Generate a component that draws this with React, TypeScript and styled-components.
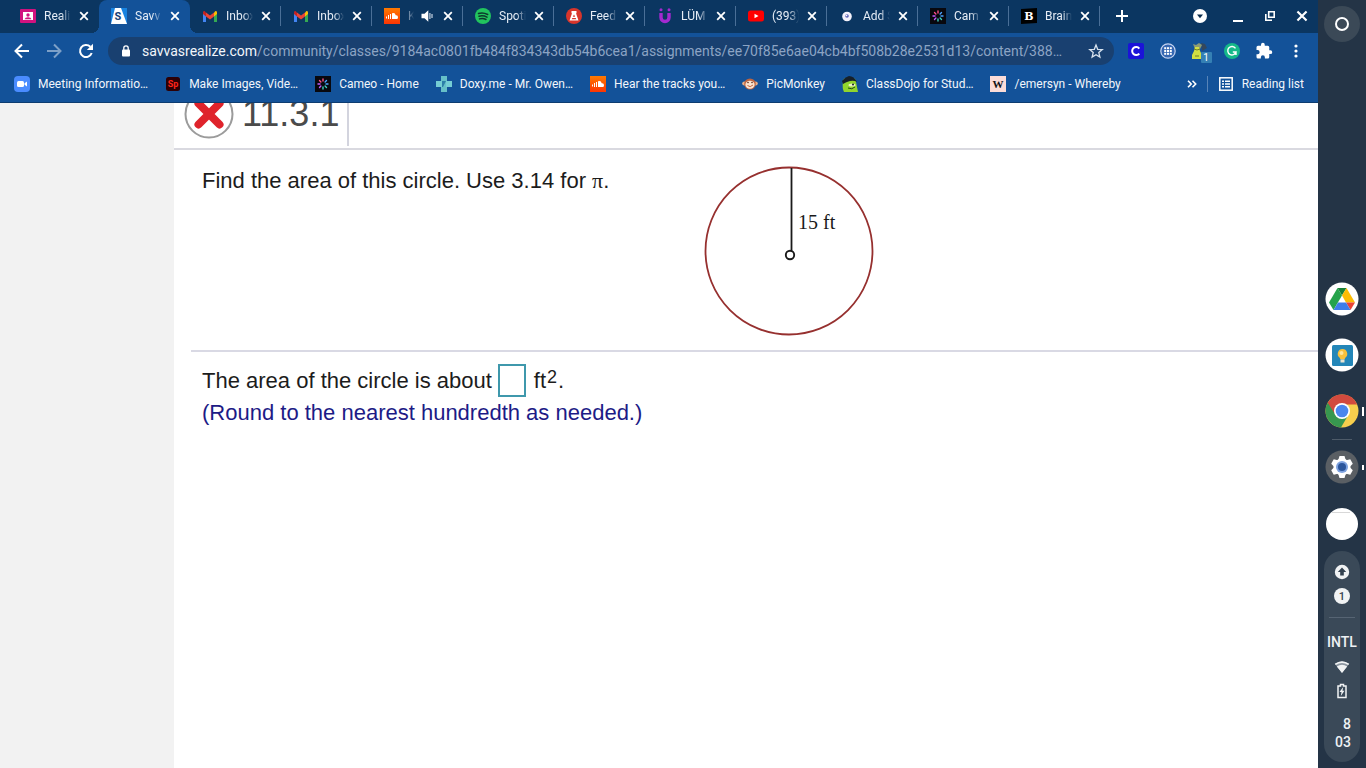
import React from "react";
import styled, { createGlobalStyle, css } from "styled-components";

const GlobalStyle = createGlobalStyle`
  *, *::before, *::after { box-sizing: border-box; }
  body { margin: 0; background: #fff; }
  button { font: inherit; color: inherit; background: none; border: 0; padding: 0; cursor: pointer; }
  svg { display: block; }
`;

const Desktop = styled.div`
  display: grid;
  grid-template-columns: minmax(0, 1fr) 48px;
  min-height: 100vh;
  font-family: Roboto, "Liberation Sans", sans-serif;
`;

const BrowserWindow = styled.div`
  display: flex;
  flex-direction: column;
  min-width: 0;
`;

/* ---------- tab strip ---------- */

const TabStrip = styled.header`
  display: flex;
  align-items: stretch;
  height: 33px;
  padding-left: 8px;
  background: #0b3661;
  color: #e6edf6;
  font-size: 12px;
`;

const Tab = styled.div<{ $active?: boolean; $divided?: boolean }>`
  position: relative;
  display: flex;
  align-items: center;
  flex: 0 1 91px;
  min-width: 0;
  padding: 0 7px 1px 12px;
  ${(p) =>
    p.$divided &&
    css`
      &::after {
        content: "";
        position: absolute;
        right: 0;
        top: 6px;
        width: 1px;
        height: 20px;
        background: #4a6f97;
      }
    `}
  ${(p) =>
    p.$active &&
    css`
      &::before {
        content: "";
        position: absolute;
        inset: 0 0 0 0;
        background: #135299;
        border-radius: 8px 8px 0 0;
      }
    `}
`;

const TabFlare = styled.span<{ $side: "left" | "right" }>`
  position: absolute;
  bottom: 0;
  ${(p) => p.$side}: -8px;
  width: 8px;
  height: 8px;
  background: radial-gradient(
    circle at ${(p) => (p.$side === "left" ? "0 0" : "100% 0")},
    transparent 8px,
    #135299 8px
  );
`;

const TabLabel = styled.a`
  position: relative;
  flex: 1;
  min-width: 0;
  margin: 0 5px 0 8px;
  overflow: hidden;
  white-space: nowrap;
  color: inherit;
  text-decoration: none;
  line-height: 16px;
  mask-image: linear-gradient(to right, #000 calc(100% - 10px), transparent 100%);
`;

const Favicon = styled.span`
  position: relative;
  flex: none;
  width: 16px;
  height: 16px;
`;

const TabButton = styled.button`
  position: relative;
  flex: none;
  display: grid;
  place-items: center;
  width: 16px;
  height: 16px;
`;

const AudioButton = styled(TabButton)`
  margin-right: 5px;
`;

const StripButton = styled.button<{ $width?: number }>`
  display: grid;
  place-items: center;
  flex: none;
  width: ${(p) => p.$width ?? 32}px;
  height: 32px;
  color: #fff;
`;

const WindowControls = styled.div`
  display: flex;
  margin-left: auto;
`;

/* ---------- toolbar ---------- */

const Toolbar = styled.div`
  display: flex;
  align-items: center;
  height: 37px;
  padding: 0 6px 1px;
  gap: 6px;
  background: #135299;
`;

const ButtonRow = styled.div`
  display: flex;
`;

const ToolButton = styled.button<{ $dim?: boolean }>`
  display: grid;
  place-items: center;
  width: 32px;
  height: 32px;
  color: #fff;
  opacity: ${(p) => (p.$dim ? 0.45 : 1)};
`;

const Omnibox = styled.form`
  display: flex;
  align-items: center;
  flex: 1;
  min-width: 0;
  height: 28px;
  padding: 0 10px 0 12px;
  border-radius: 14px;
  background: #194070;
  color: #fff;
`;

const Url = styled.div`
  flex: 1;
  min-width: 0;
  margin: 0 8px 0 10px;
  overflow: hidden;
  white-space: nowrap;
  font-size: 14px;
  line-height: 20px;
  color: #8ca4c4;
`;

const Host = styled.span`
  color: #f2f6fb;
`;

/* ---------- bookmarks ---------- */

const BookmarkBar = styled.nav`
  display: flex;
  align-items: center;
  height: 33px;
  padding: 0 14px 4px;
  gap: 17px;
  background: #135299;
  border-bottom: 1px solid #0d3c70;
  color: #f2f6fb;
  font-size: 12px;
  line-height: 16px;
`;

const Bookmark = styled.a`
  display: flex;
  align-items: center;
  gap: 8px;
  white-space: nowrap;
  color: inherit;
  text-decoration: none;
`;

const BookmarkEnd = styled.div`
  display: flex;
  align-items: center;
  gap: 10px;
  margin-left: auto;
`;

const BarDivider = styled.span`
  width: 1px;
  height: 16px;
  background: #5784b8;
`;

const ReadingList = styled.button`
  display: flex;
  align-items: center;
  gap: 8px;
  white-space: nowrap;
`;

/* ---------- page ---------- */

const Page = styled.div`
  display: flex;
  flex: 1;
  background: #fff;
  font-family: "Liberation Sans", Arial, sans-serif;
`;

const Gutter = styled.aside`
  flex: none;
  width: 174px;
  background: #f2f2f2;
`;

const Exercise = styled.main`
  flex: 1;
  min-width: 0;
  color: #1c1c1c;
  font-size: 22px;
  line-height: 32px;
`;

const ExerciseHeader = styled.div`
  display: flex;
  align-items: flex-end;
  height: 47px;
  overflow: hidden;
  border-bottom: 2px solid #d9d9e0;
`;

const ExerciseId = styled.div`
  display: flex;
  align-items: center;
  gap: 8px;
  height: 64px;
  margin-bottom: 2px;
  padding: 0 8px 0 10px;
  border-right: 2px solid #d3d4de;
`;

const IdText = styled.h1`
  margin: 0;
  font-size: 36px;
  font-weight: 400;
  line-height: 40px;
  color: #4b4b4b;
`;

const Question = styled.section`
  display: flex;
  margin-left: 17px;
  padding: 15px 0 12px 11px;
  border-bottom: 2px solid #d9d9e4;
`;

const Prompt = styled.p`
  margin: 0;
  width: 501px;
`;

const Pi = styled.span`
  font-family: "Liberation Serif", serif;
`;

const Answer = styled.form`
  padding: 12px 0 0 28px;
`;

const AnswerLine = styled.div`
  display: flex;
  align-items: center;
  height: 33px;
`;

const AnswerInput = styled.input`
  width: 28px;
  height: 33px;
  margin: 0 8px 0 6px;
  padding: 0 4px;
  border: 2px solid #3f98ac;
  background: #fff;
  font: inherit;
`;

const Exponent = styled.sup`
  font-size: 18px;
  line-height: 0;
  vertical-align: 5px;
  margin: 0 1px;
`;

const Hint = styled.p`
  margin: 0;
  color: #1d1b86;
`;

/* ---------- shelf ---------- */

const Shelf = styled.aside`
  display: flex;
  flex-direction: column;
  align-items: center;
  padding: 6px 0;
  background: #243446;
  color: #eef1f4;
`;

const Launcher = styled.button`
  display: grid;
  place-items: center;
  width: 36px;
  height: 36px;
  border-radius: 50%;
  background: #3b4957;
`;

const Apps = styled.div`
  display: flex;
  flex-direction: column;
  align-items: center;
  width: 100%;
  margin-top: auto;
`;

const AppButton = styled.button<{ $running?: "tall" | "short" }>`
  position: relative;
  display: grid;
  place-items: center;
  width: 100%;
  height: 56px;
  ${(p) =>
    p.$running &&
    css`
      &::after {
        content: "";
        position: absolute;
        right: 2px;
        width: 2px;
        height: ${p.$running === "tall" ? 9 : 5}px;
        background: #fff;
      }
    `}
`;

const ShelfDivider = styled.span`
  width: 20px;
  height: 1px;
  margin-bottom: -1px;
  background: #4e5b69;
`;

const MiniWindow = styled.span`
  width: 32px;
  height: 32px;
  margin-top: 2px;
  border-radius: 50%;
  background: linear-gradient(#d8d8d8, #d8d8d8) 6px 4px / 18px 1px no-repeat #fff;
`;

const Status = styled.section`
  display: flex;
  flex-direction: column;
  align-items: center;
  width: 36px;
  height: 211px;
  padding-top: 13px;
  border-radius: 18px;
  background: #3a4958;
  font-size: 14px;
  line-height: 18px;
`;

const StatusIcons = styled.div`
  display: grid;
  justify-items: center;
  gap: 8px;
`;

const StatusDivider = styled.span`
  width: 26px;
  height: 1px;
  margin: 13px 0 16px;
  background: #566473;
`;

const Keyboard = styled.span`
  font-size: 14px;
  font-weight: 500;
  line-height: 16px;
  margin-bottom: 9px;
`;

const Clock = styled.time`
  align-self: flex-end;
  display: grid;
  justify-items: end;
  margin: 16px 9px 0 0;
  font-weight: 500;
`;

/* ---------- drawings ---------- */

type IconKind =
  | "real" | "savvas" | "gmail" | "soundcloud" | "spotify" | "feed" | "lum"
  | "youtube" | "disc" | "cameo" | "brain" | "zoom" | "spark" | "doxy"
  | "monkey" | "dojo" | "whereby";

const Art: Record<IconKind, React.ReactNode> = {
  real: (
    <>
      <rect y="1" width="16" height="14" rx="1" fill="#d1127f" />
      <rect x="3" y="4" width="10" height="8" fill="#fff" />
      <circle cx="8" cy="7" r="1.700" fill="#d1127f" />
      <path d="M4.500 11.200Q5 9.200 8 9.200t3.500 2z" fill="#d1127f" />
    </>
  ),
  savvas: (
    <>
      <rect width="16" height="16" fill="#1783e0" />
      <path d="M4 0h6l6 16H0z" fill="#fff" />
      <text x="7" y="12" fontSize="11" fontWeight="700" textAnchor="middle" fill="#163e75">S</text>
    </>
  ),
  gmail: (
    <>
      <path d="M1 4v10h3V7z" fill="#4285f4" />
      <path d="M15 4v10h-3V7z" fill="#34a853" />
      <path d="M12 4.500 13.500 3Q15 2.500 15 4.500V6l-3 2.500z" fill="#fbbc04" />
      <path d="M4 4.500 8 7.500l4-3v4L8 11.500 4 8.500z" fill="#ea4335" />
      <path d="M4 4.500 2.500 3Q1 2.500 1 4.500V6l3 2.500z" fill="#c5221f" />
    </>
  ),
  soundcloud: (
    <>
      <defs>
        <linearGradient id="sc" x1="0" y1="0" x2="0" y2="1">
          <stop stopColor="#ff7a00" />
          <stop offset="1" stopColor="#fb3504" />
        </linearGradient>
      </defs>
      <rect width="16" height="16" fill="url(#sc)" />
      <path d="M2.500 8.500v2M4.500 7v4M6.500 6v5" stroke="#fff" />
      <path d="M8 11V5.300Q11 4 11.700 7.300 14 7 14 9.200T12 11z" fill="#fff" />
    </>
  ),
  spotify: (
    <>
      <circle cx="8" cy="8" r="8" fill="#22c45e" />
      <path d="M3.500 5.500Q8 4 12.700 6.500M4 8.300Q8 7 12 9.200M4.500 10.900Q8 9.800 11 11.500" fill="none" stroke="#0c3a2b" strokeWidth="1.500" strokeLinecap="round" />
    </>
  ),
  feed: (
    <>
      <circle cx="8" cy="8" r="8" fill="#d8352b" />
      <path d="M5.500 3h5v2.200h-.5l2.500 7.300h-9L6 5.200h-.5z" fill="#fff" />
      <path d="M8 6.500l1.200 2.300H6.800zM6.300 10h3.400l.6 1.300H5.700z" fill="#d8352b" />
    </>
  ),
  lum: (
    <>
      <path d="M4 5v4.500a4 4 0 0 0 8 0V5" fill="none" stroke="#a32ad0" strokeWidth="3.400" />
      <circle cx="4" cy="1.700" r="1.500" fill="#a32ad0" />
      <circle cx="12" cy="1.700" r="1.500" fill="#a32ad0" />
    </>
  ),
  youtube: (
    <>
      <rect y="2.500" width="16" height="11" rx="2.500" fill="#f00" />
      <path d="M6.500 5.700v4.600l4-2.300z" fill="#fff" />
    </>
  ),
  disc: (
    <>
      <circle cx="8" cy="8.500" r="4.800" fill="#f4f2fb" />
      <circle cx="8" cy="8" r="1.800" fill="#6064b8" />
      <circle cx="7.500" cy="7.500" r=".8" fill="#fff" />
    </>
  ),
  cameo: (
    <>
      <rect width="16" height="16" fill="#08080e" />
      <g strokeWidth="1.400" strokeLinecap="round">
        <path d="M8 3v2M5.900 5.900 4.500 4.500" stroke="#ff4f87" />
        <path d="M10.100 5.900l1.400-1.400M11 8h2" stroke="#4ba3ff" />
        <path d="M10.100 10.100l1.400 1.400M8 11v2" stroke="#3ecfc0" />
        <path d="M5.900 10.100l-1.400 1.400M3 8h2" stroke="#c35bff" />
      </g>
    </>
  ),
  brain: (
    <>
      <path d="M0 1l16-1v15L0 16z" fill="#000" />
      <text x="8" y="12" fontSize="11" fontWeight="700" fontFamily="DejaVu Serif, serif" textAnchor="middle" fill="#fff">B</text>
    </>
  ),
  zoom: (
    <>
      <rect width="16" height="16" rx="4" fill="#4a8cff" />
      <rect x="3" y="5" width="7" height="6" rx="1.500" fill="#fff" />
      <path d="M10.500 7.300 13 5.500v5l-2.500-1.800z" fill="#fff" />
    </>
  ),
  spark: (
    <>
      <rect x="1" y="1" width="14" height="14" rx="2.500" fill="#2d0005" />
      <text x="8" y="11" fontSize="9" fontWeight="700" textAnchor="middle" fill="#ff2419">Sp</text>
    </>
  ),
  doxy: (
    <>
      <path d="M5 0h6v16H5z" fill="#66bfc8" />
      <path d="M0 5h6v6H0zM10 5h6v6h-6z" fill="#75cdd4" />
      <path d="M6 5h4l-3 6h-1z" fill="#2d7fa8" />
    </>
  ),
  monkey: (
    <>
      <circle cx="2.300" cy="7.500" r="2.100" fill="#e9b08a" />
      <circle cx="13.700" cy="7.500" r="2.100" fill="#e9b08a" />
      <ellipse cx="8" cy="8" rx="5.800" ry="5.500" fill="#bd6440" />
      <ellipse cx="8" cy="8.700" rx="4.600" ry="4" fill="#fbe3cf" />
      <circle cx="6" cy="6.500" r=".8" fill="#5b2a18" />
      <circle cx="10" cy="6.500" r=".8" fill="#5b2a18" />
      <path d="M5.500 9.500Q8 12 11 9" fill="none" stroke="#bd6440" />
    </>
  ),
  dojo: (
    <>
      <path d="M1 6Q1 1 7 2q7-1 7 4l2 10H2Q0 12 1 6z" fill="#91d52c" />
      <path d="M0 5Q3 1 7 0q5 0 8 6-3-2-7-1T1 8z" fill="#16202a" />
      <ellipse cx="10" cy="9" rx="3.500" ry="1.600" fill="#eaf4c0" />
      <path d="M6 12q4 2 7-1" stroke="#234a16" fill="none" />
      <circle cx="11" cy="8.500" r="1" fill="#16202a" />
    </>
  ),
  whereby: (
    <>
      <rect width="16" height="16" fill="#fbdcd8" />
      <text x="8" y="12" fontSize="11" fontWeight="700" fontFamily="Liberation Serif, serif" textAnchor="middle" fill="#15151a">W</text>
    </>
  ),
};

const SiteIcon = ({ kind }: { kind: IconKind }) => (
  <Favicon aria-hidden="true">
    <svg width="16" height="16" viewBox="0 0 16 16">{Art[kind]}</svg>
  </Favicon>
);

const CloseGlyph = ({ size = 10 }: { size?: number }) => (
  <svg width={size} height={size} viewBox="0 0 10 10">
    <path d="M1.200 1.200l7.600 7.600M8.800 1.200L1.200 8.800" stroke="#fff" strokeWidth="1.800" />
  </svg>
);

const tabs: { icon: IconKind; label: string; active?: boolean; audio?: boolean }[] = [
  { icon: "real", label: "Reali" },
  { icon: "savvas", label: "Savv", active: true },
  { icon: "gmail", label: "Inbox" },
  { icon: "gmail", label: "Inbox" },
  { icon: "soundcloud", label: "K", audio: true },
  { icon: "spotify", label: "Spoti" },
  { icon: "feed", label: "Feed" },
  { icon: "lum", label: "LÜM" },
  { icon: "youtube", label: "(393)" },
  { icon: "disc", label: "Add S" },
  { icon: "cameo", label: "Cam" },
  { icon: "brain", label: "Brain" },
];

const bookmarks: { icon: IconKind; label: string }[] = [
  { icon: "zoom", label: "Meeting Informatio…" },
  { icon: "spark", label: "Make Images, Vide…" },
  { icon: "cameo", label: "Cameo - Home" },
  { icon: "doxy", label: "Doxy.me - Mr. Owen…" },
  { icon: "soundcloud", label: "Hear the tracks you…" },
  { icon: "monkey", label: "PicMonkey" },
  { icon: "dojo", label: "ClassDojo for Stud…" },
  { icon: "whereby", label: "/emersyn - Whereby" },
];

const Tabs = () => (
  <TabStrip>
    {tabs.map((t, i) => (
      <Tab key={i} $active={t.active} $divided={i > 1}>
        {t.active && (
          <>
            <TabFlare $side="left" />
            <TabFlare $side="right" />
          </>
        )}
        <SiteIcon kind={t.icon} />
        <TabLabel href="#">{t.label}</TabLabel>
        {t.audio && (
          <AudioButton aria-label="Mute tab">
            <svg width="16" height="16" viewBox="0 0 16 16">
              <path d="M2.500 5.700h3L9.300 2.200v11.600L5.500 10.300h-3z" fill="#fff" />
              <path d="M10.900 5v6M13 6v4" stroke="#c5d2e2" strokeWidth="1.200" />
            </svg>
          </AudioButton>
        )}
        <TabButton aria-label="Close tab"><CloseGlyph /></TabButton>
      </Tab>
    ))}
    <StripButton $width={44} aria-label="New tab">
      <svg width="12" height="12" viewBox="0 0 12 12"><path d="M6 0v12M0 6h12" stroke="#fff" strokeWidth="2" /></svg>
    </StripButton>
    <WindowControls>
      <StripButton $width={44} aria-label="Search tabs">
        <svg width="14" height="14" viewBox="0 0 14 14">
          <circle cx="7" cy="7" r="7" fill="#fff" />
          <path d="M4 5.500h6L7 9.200z" fill="#0b2c4d" />
        </svg>
      </StripButton>
      <StripButton aria-label="Minimize">
        <svg width="10" height="12" viewBox="0 0 10 12"><path d="M0 11h10" stroke="#fff" strokeWidth="2" /></svg>
      </StripButton>
      <StripButton aria-label="Restore">
        <svg width="10" height="10" viewBox="0 0 10 10" fill="none" stroke="#fff" strokeWidth="1.600">
          <path d="M3.700.8h5.500v5.500H3.700zM.8 3v6.200H7" />
        </svg>
      </StripButton>
      <StripButton aria-label="Close"><CloseGlyph size={12} /></StripButton>
    </WindowControls>
  </TabStrip>
);

const AddressBar = () => (
  <Toolbar>
    <ButtonRow>
      <ToolButton aria-label="Back">
        <svg width="16" height="16" viewBox="0 0 16 16" fill="none" stroke="#fff" strokeWidth="2"><path d="M15 8H2.500M8 1.500L1.500 8 8 14.500" /></svg>
      </ToolButton>
      <ToolButton aria-label="Forward" $dim>
        <svg width="16" height="16" viewBox="0 0 16 16" fill="none" stroke="#fff" strokeWidth="2"><path d="M1 8h12.500M8 1.500L14.500 8 8 14.500" /></svg>
      </ToolButton>
      <ToolButton aria-label="Reload">
        <svg width="16" height="16" viewBox="0 0 16 16">
          <path d="M13.700 10A6 6 0 1 1 12.300 3.800" fill="none" stroke="#fff" strokeWidth="2" />
          <path d="M15 .8V7H8.800z" fill="#fff" />
        </svg>
      </ToolButton>
    </ButtonRow>
    <Omnibox>
      <svg width="12" height="12" viewBox="0 0 12 12">
        <rect x="2" y="4.500" width="8" height="7" rx="1" fill="#fff" />
        <path d="M3.800 5V3a2.200 2.200 0 0 1 4.400 0v2" fill="none" stroke="#fff" strokeWidth="1.300" />
      </svg>
      <Url>
        <Host>savvasrealize.com</Host>/community/classes/9184ac0801fb484f834343db54b6cea1/assignments/ee70f85e6ae04cb4bf508b28e2531d13/content/388…
      </Url>
      <button type="button" aria-label="Bookmark this page">
        <svg width="16" height="16" viewBox="0 0 16 16" fill="none" stroke="#d9e3ef" strokeWidth="1.300">
          <path d="M8 2l1.700 4.300 4.600.3-3.500 3 1.100 4.500L8 11.700l-3.900 2.400 1.100-4.500-3.500-3 4.600-.3z" />
        </svg>
      </button>
    </Omnibox>
    <ButtonRow>
      <ToolButton aria-label="Clever">
        <svg width="16" height="16" viewBox="0 0 16 16">
          <rect width="16" height="16" rx="2" fill="#1b13d8" />
          <path d="M11.300 10.500a4 4 0 1 1 0-5" fill="none" stroke="#fff" strokeWidth="2" />
        </svg>
      </ToolButton>
      <ToolButton aria-label="App grid">
        <svg width="16" height="16" viewBox="0 0 16 16">
          <circle cx="8" cy="8" r="7.200" fill="#3567b2" stroke="#c6d3f0" strokeWidth="1.200" />
          {[4.2, 7, 9.8].map((y) =>
            [4.2, 7, 9.8].map((x) => <rect key={`${x}-${y}`} x={x} y={y} width="2" height="2" fill="#fff" />)
          )}
        </svg>
      </ToolButton>
      <ToolButton aria-label="Farm extension">
        <svg width="24" height="24" viewBox="0 0 24 24">
          <path d="M13 4l4 1 2 4-5 3z" fill="#34475c" />
          <path d="M5 5l3 1 3-2 3 2-2 4H7z" fill="#8c9a74" />
          <path d="M7 8h4l1 4 2 4v4H4v-4l2-4z" fill="#d2df42" />
          <path d="M6 10q3 2 6 0M7 17h4" stroke="#6f7c2a" fill="none" />
          <rect x="13" y="13" width="11" height="11" rx="1" fill="#3580b4" />
          <text x="18" y="22" fontSize="10" textAnchor="middle" fill="#fff">1</text>
        </svg>
      </ToolButton>
      <ToolButton aria-label="Grammarly">
        <svg width="16" height="16" viewBox="0 0 16 16">
          <circle cx="8" cy="8" r="8" fill="#15b889" />
          <path d="M11.500 5.400A4.200 4.200 0 1 0 12 9H8.800M12 9v3" fill="none" stroke="#fff" strokeWidth="1.400" />
        </svg>
      </ToolButton>
      <ToolButton aria-label="Extensions">
        <svg width="18" height="18" viewBox="0 0 24 24" fill="#fff">
          <path d="M20.500 11H19V7a2 2 0 0 0-2-2h-4V3.500a2.500 2.500 0 0 0-5 0V5H4a2 2 0 0 0-2 2v3.800h1.500a2.700 2.700 0 0 1 0 5.400H2V20a2 2 0 0 0 2 2h3.800v-1.500a2.700 2.700 0 0 1 5.400 0V22H17a2 2 0 0 0 2-2v-4h1.500a2.500 2.500 0 0 0 0-5z" />
        </svg>
      </ToolButton>
      <ToolButton aria-label="Menu">
        <svg width="4" height="14" viewBox="0 0 4 14" fill="#fff">
          <circle cx="2" cy="2" r="1.600" /><circle cx="2" cy="7" r="1.600" /><circle cx="2" cy="12" r="1.600" />
        </svg>
      </ToolButton>
    </ButtonRow>
  </Toolbar>
);

const Bookmarks = () => (
  <BookmarkBar aria-label="Bookmarks">
    {bookmarks.map((b) => (
      <Bookmark key={b.label} href="#"><SiteIcon kind={b.icon} />{b.label}</Bookmark>
    ))}
    <BookmarkEnd>
      <button aria-label="More bookmarks">
        <svg width="10" height="8" viewBox="0 0 10 8" fill="none" stroke="#fff" strokeWidth="1.600"><path d="M1 .8L4.200 4 1 7.200M5.500.8L8.700 4 5.500 7.200" /></svg>
      </button>
      <BarDivider />
      <ReadingList>
        <svg width="16" height="16" viewBox="0 0 16 16">
          <rect x="1.800" y="1.800" width="12.400" height="12.400" fill="none" stroke="#fff" strokeWidth="1.500" />
          <path d="M4 5.200h2M4 8h2M4 10.800h2M7 5.200h5M7 8h5M7 10.800h5" stroke="#fff" strokeWidth="1.400" />
        </svg>
        Reading list
      </ReadingList>
    </BookmarkEnd>
  </BookmarkBar>
);

const CircleFigure = () => (
  <svg width="172" height="173" viewBox="0 0 172 173" role="img" aria-label="Circle with radius 15 ft">
    <circle cx="86" cy="86" r="83.500" fill="none" stroke="#96302f" strokeWidth="1.800" />
    <path d="M88.500 3v83" stroke="#1a1a1a" strokeWidth="1.800" />
    <circle cx="87" cy="90" r="4.200" fill="#fff" stroke="#1a1a1a" strokeWidth="1.900" />
    <text x="95" y="64" fontFamily="Liberation Serif, serif" fontSize="20" fill="#1a1a1a">15 ft</text>
  </svg>
);

const ExercisePage = () => (
  <Page>
    <Gutter />
    <Exercise>
      <ExerciseHeader>
        <ExerciseId>
          <svg width="50" height="50" viewBox="0 0 50 50" role="img" aria-label="Incorrect">
            <circle cx="25" cy="25" r="23.500" fill="#fff" stroke="#9b9b9b" strokeWidth="2" />
            <path d="M14.500 14.500l21 21M35.500 14.500l-21 21" stroke="#df232b" strokeWidth="8" strokeLinecap="round" />
          </svg>
          <IdText>11.3.1</IdText>
        </ExerciseId>
      </ExerciseHeader>
      <Question>
        <Prompt>Find the area of this circle. Use 3.14 for <Pi>π</Pi>.</Prompt>
        <CircleFigure />
      </Question>
      <Answer>
        <AnswerLine>
          <label htmlFor="area">The area of the circle is about</label>
          <AnswerInput id="area" type="text" />
          <span>ft<Exponent>2</Exponent>.</span>
        </AnswerLine>
        <Hint>(Round to the nearest hundredth as needed.)</Hint>
      </Answer>
    </Exercise>
  </Page>
);

const SystemShelf = () => (
  <Shelf aria-label="Shelf">
    <Launcher aria-label="Launcher">
      <svg width="16" height="16" viewBox="0 0 16 16"><circle cx="8" cy="8" r="6" fill="none" stroke="#fff" strokeWidth="2" /></svg>
    </Launcher>
    <Apps>
      <AppButton aria-label="Drive">
        <svg width="34" height="34" viewBox="0 0 34 34">
          <circle cx="17" cy="17" r="16.500" fill="#fff" />
          <path d="M12.500 6h9L17 13.500z" fill="#188038" />
          <path d="M12.500 6l4.500 7.500L8.500 28 4 20.500z" fill="#25a34b" />
          <path d="M21.500 6L30 20.500h-9L17 13.500z" fill="#fbbc04" />
          <path d="M21 20.500h9L25.500 28z" fill="#ea4335" />
          <path d="M13 20.500h8l4.500 7.500h-17z" fill="#3e7de8" />
        </svg>
      </AppButton>
      <AppButton aria-label="Idea notes">
        <svg width="34" height="34" viewBox="0 0 34 34">
          <circle cx="17" cy="17" r="16.500" fill="#fff" />
          <rect x="7" y="7" width="21" height="21" rx="1.500" fill="#2386b8" />
          <path d="M17.500 11a4.800 4.800 0 0 1 3 8.500l-1 2h-4l-1-2a4.800 4.800 0 0 1 3-8.500z" fill="#f9c13a" />
          <rect x="15.500" y="21.500" width="4" height="3" fill="#e7e3d1" />
          <circle cx="16.500" cy="15" r="2" fill="#ffe69b" />
        </svg>
      </AppButton>
      <AppButton aria-label="Chrome" $running="tall">
        <svg width="34" height="34" viewBox="0 0 34 34">
          <circle cx="17" cy="17" r="16.500" fill="#f7cf4d" />
          <path d="M17 17L2.700 8.800A16.500 16.500 0 0 0 16 33.500l7-12z" fill="#37974f" />
          <path d="M2.700 8.800A16.500 16.500 0 0 1 32.200 10.500H17L10 20z" fill="#d24a3e" />
          <circle cx="17" cy="17" r="8" fill="#fff" />
          <circle cx="17" cy="17" r="6.300" fill="#4a86ee" />
        </svg>
      </AppButton>
      <ShelfDivider />
      <AppButton aria-label="Settings" $running="short">
        <svg width="34" height="34" viewBox="0 0 34 34">
          <circle cx="17" cy="17" r="16.500" fill="#5a5f64" />
          <g fill="#fff">
            <circle cx="17" cy="17" r="8.500" />
            {[0, 60, 120, 180, 240, 300].map((a) => (
              <path key={a} d="M14.500 6h5l1.500 5h-8z" transform={`rotate(${a} 17 17)`} />
            ))}
          </g>
          <circle cx="17" cy="17" r="6" fill="#7fa3e0" />
          <circle cx="17" cy="17" r="4" fill="#2c569c" />
        </svg>
      </AppButton>
      <AppButton aria-label="Minimized window"><MiniWindow /></AppButton>
    </Apps>
    <Status aria-label="Status area">
      <StatusIcons>
        <svg width="16" height="16" viewBox="0 0 16 16">
          <circle cx="8" cy="8" r="7.200" fill="#f1f3f4" />
          <path d="M8 3.500l4.200 4.500H9.800V11.500H6.200V8H3.800z" fill="#33414f" />
        </svg>
        <svg width="16" height="16" viewBox="0 0 16 16">
          <circle cx="8" cy="8" r="8" fill="#f1f3f4" />
          <text x="8" y="12" fontSize="11" fontWeight="500" textAnchor="middle" fill="#33414f">1</text>
        </svg>
      </StatusIcons>
      <StatusDivider />
      <Keyboard>INTL</Keyboard>
      <StatusIcons>
        <svg width="16" height="16" viewBox="0 0 16 16">
          <path d="M.8 4.800Q8-.2 15.200 4.800L8 14z" fill="#8b959f" />
          <path d="M.8 4.800Q8-.2 15.200 4.800l-1 1.300Q8 2 1.800 6.100zM2.800 7.400Q8 4 13.200 7.400L8 14z" fill="#f1f3f4" />
        </svg>
        <svg width="16" height="16" viewBox="0 0 16 16">
          <path d="M6.500 3V1.500h3V3H12v11.500H4V3z" fill="none" stroke="#f1f3f4" strokeWidth="1.500" />
          <path d="M9.200 4L5.500 9h2L6.800 13l3.700-5.200h-2z" fill="#f1f3f4" />
        </svg>
      </StatusIcons>
      <Clock dateTime="08:03"><span>8</span><span>03</span></Clock>
    </Status>
  </Shelf>
);

export default function App() {
  return (
    <>
      <GlobalStyle />
      <Desktop>
        <BrowserWindow>
          <Tabs />
          <AddressBar />
          <Bookmarks />
          <ExercisePage />
        </BrowserWindow>
        <SystemShelf />
      </Desktop>
    </>
  );
}
